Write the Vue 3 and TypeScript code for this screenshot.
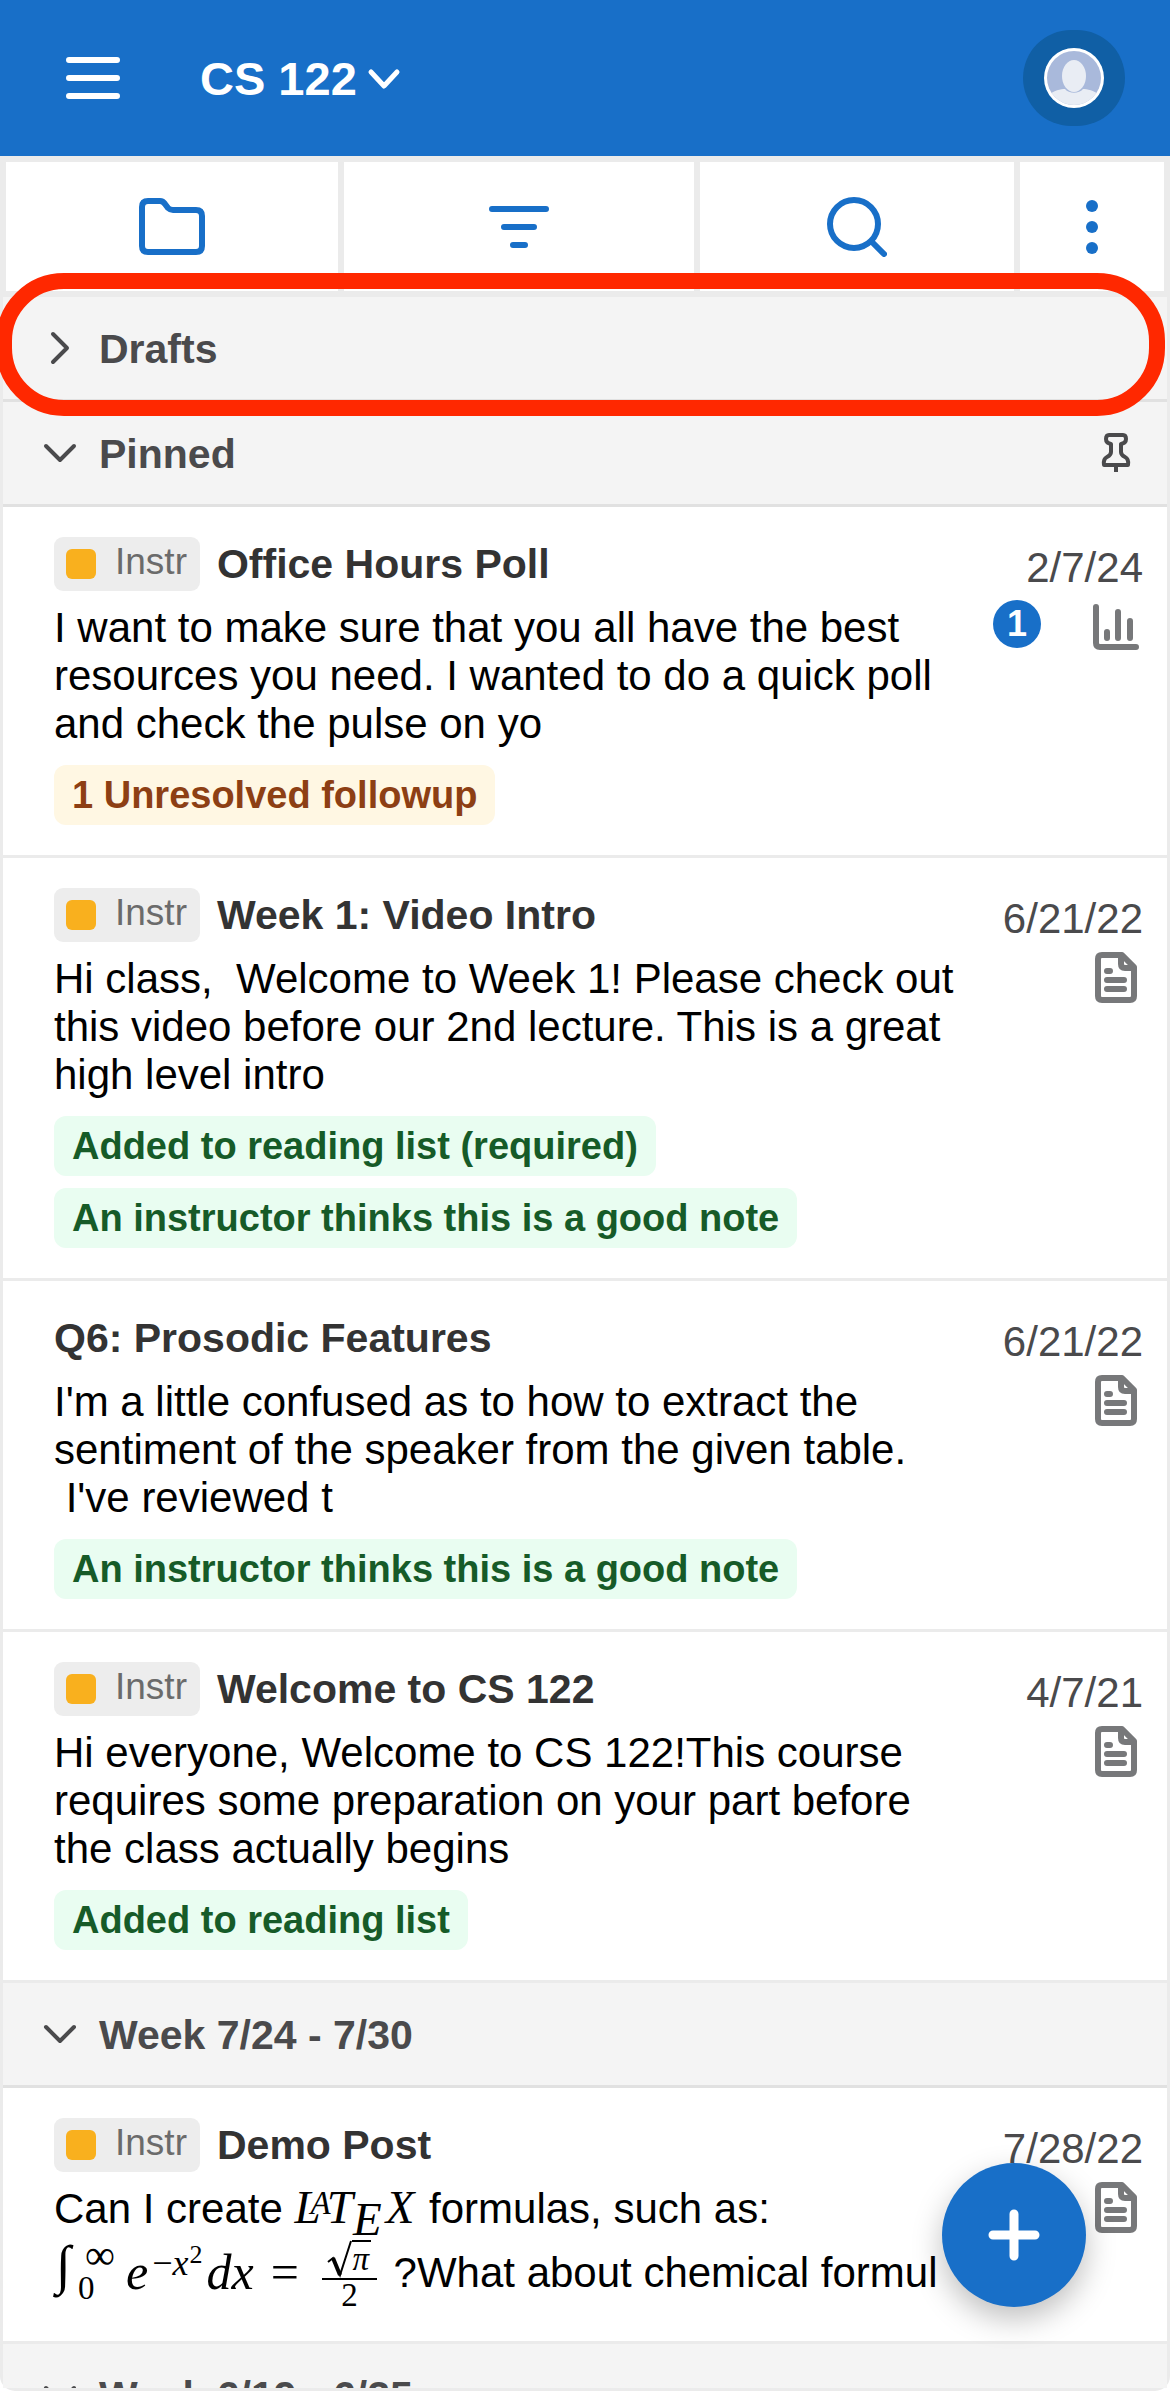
<script setup lang="ts">
import { ref } from 'vue'

type PostKind = 'poll' | 'note'

interface Tag {
  text: string
  tone: 'warn' | 'good'
}

interface Post {
  title: string
  instructor: boolean
  date: string
  kind: PostKind
  unread?: number
  preview?: string
  formula?: boolean
  tags: Tag[]
}

interface Section {
  label: string
  pinned: boolean
  posts: Post[]
}

const course = ref('CS 122')

const sections: Section[] = [
  {
    label: 'Pinned',
    pinned: true,
    posts: [
      {
        title: 'Office Hours Poll',
        instructor: true,
        date: '2/7/24',
        kind: 'poll',
        unread: 1,
        preview:
          'I want to make sure that you all have the best resources you need. I wanted to do a quick poll and check the pulse on yo',
        tags: [{ text: '1 Unresolved followup', tone: 'warn' }],
      },
      {
        title: 'Week 1: Video Intro',
        instructor: true,
        date: '6/21/22',
        kind: 'note',
        preview:
          'Hi class,\u00a0 Welcome to Week 1! Please check out this video before our 2nd lecture. This is a great high level intro',
        tags: [
          { text: 'Added to reading list (required)', tone: 'good' },
          { text: 'An instructor thinks this is a good note', tone: 'good' },
        ],
      },
      {
        title: 'Q6: Prosodic Features',
        instructor: false,
        date: '6/21/22',
        kind: 'note',
        preview:
          "I'm a little confused as to how to extract the sentiment of the speaker from the given table. \u00a0I've reviewed t",
        tags: [{ text: 'An instructor thinks this is a good note', tone: 'good' }],
      },
      {
        title: 'Welcome to CS 122',
        instructor: true,
        date: '4/7/21',
        kind: 'note',
        preview:
          'Hi everyone, Welcome to CS 122!This course requires some preparation on your part before the class actually begins',
        tags: [{ text: 'Added to reading list', tone: 'good' }],
      },
    ],
  },
  {
    label: 'Week 7/24 - 7/30',
    pinned: false,
    posts: [
      {
        title: 'Demo Post',
        instructor: true,
        date: '7/28/22',
        kind: 'note',
        formula: true,
        tags: [],
      },
    ],
  },
  { label: 'Week 6/19 - 6/25', pinned: false, posts: [] },
]
</script>

<template>
  <div class="app">
    <header class="topbar">
      <button class="menu" type="button" aria-label="Menu">
        <svg width="54" height="42" viewBox="0 0 54 42" class="line">
          <path d="M3 3H51M3 21H51M3 39H51" />
        </svg>
      </button>
      <button class="course" type="button">
        <span>{{ course }}</span>
        <svg width="36" height="36" viewBox="0 0 36 36" class="line medium">
          <path d="M5 12L18 26L31 12" />
        </svg>
      </button>
      <button class="account" type="button" aria-label="Account">
        <svg width="60" height="60" viewBox="0 0 60 60">
          <defs>
            <clipPath id="face"><circle cx="30" cy="30" r="27" /></clipPath>
          </defs>
          <circle cx="30" cy="30" r="30" fill="#fff" />
          <g clip-path="url(#face)">
            <rect width="60" height="60" fill="#a9b9db" />
            <path d="M3 60V48C10 42 17 41 21 41C25 46 35 46 39 41C43 41 50 42 57 48V60Z" fill="#e9edf4" />
            <ellipse cx="30" cy="28" rx="12" ry="16" fill="#e9edf4" />
          </g>
        </svg>
      </button>
    </header>

    <nav class="toolbar" aria-label="Feed tools">
      <button type="button" aria-label="Folders">
        <svg width="66" height="57" viewBox="0 0 66 57" class="line">
          <path
            d="M3 9Q3 3 9 3H21Q24 3 26 6L29 10Q31 12 34 12H57Q63 12 63 18V48Q63 54 57 54H9Q3 54 3 48Z"
          />
        </svg>
      </button>
      <button type="button" aria-label="Filter">
        <svg width="60" height="42" viewBox="0 0 60 42" class="line">
          <path d="M3 3H57M15 21H45M24 39H36" />
        </svg>
      </button>
      <button type="button" aria-label="Search">
        <svg width="60" height="60" viewBox="0 0 60 60" class="line">
          <circle cx="27" cy="27" r="24" />
          <path d="M45 45L57 57" />
        </svg>
      </button>
      <button type="button" aria-label="More">
        <svg width="12" height="54" viewBox="0 0 12 54" fill="currentColor">
          <circle cx="6" cy="6" r="6" />
          <circle cx="6" cy="27" r="6" />
          <circle cx="6" cy="48" r="6" />
        </svg>
      </button>
    </nav>

    <main class="feed">
      <div class="drafts">
        <button class="group" type="button" aria-expanded="false">
          <svg width="36" height="36" viewBox="0 0 36 36" class="line thin">
            <path d="M11 4L25 18L11 32" />
          </svg>
          <span class="label">Drafts</span>
        </button>
        <div class="highlight"></div>
      </div>

      <div class="list">
        <section v-for="section in sections" :key="section.label">
          <button class="group" type="button" aria-expanded="true">
            <svg width="36" height="36" viewBox="0 0 36 36" class="line thin">
              <path d="M4 11L18 25L32 11" />
            </svg>
            <span class="label">{{ section.label }}</span>
            <svg v-if="section.pinned" class="pin" width="48" height="48" viewBox="0 0 48 48">
              <path
                d="M17 6H31Q34 6 34 10Q34 14 29 15V23Q29 26 33 28Q37 30 36 36H12Q11 30 15 28Q19 26 19 23V15Q14 14 14 10Q14 6 17 6ZM24 36V43"
              />
            </svg>
          </button>

          <article v-for="post in section.posts" :key="post.title" class="post">
            <div class="body">
              <div class="head">
                <span v-if="post.instructor" class="instr"><i></i>Instr</span>
                <h2>{{ post.title }}</h2>
              </div>
              <p v-if="post.formula" class="preview">
                Can I create
                <span class="math latex"
                  ><span>L</span><span class="la">A</span><span class="lt">T</span
                  ><span class="le">E</span><span class="lx">X</span></span
                >
                formulas, such as:
                <span class="math integral">
                  <span class="int">∫</span>
                  <span class="limits"><span class="upper">∞</span><span>0</span></span>
                  <span class="term"
                    ><em>e</em><span class="power">−<em>x</em><span class="square">2</span></span
                    ><em>dx</em></span
                  >
                  <span class="equals">=</span>
                  <span class="fraction">
                    <span class="numerator">
                      <svg width="25" height="38" viewBox="0 0 25 38">
                        <path d="M1 22L6 18L13 35L24 1" />
                        <path d="M6 18L13 35" stroke-width="4" />
                      </svg>
                      <span class="radicand">π</span>
                    </span>
                    <span class="denominator">2</span>
                  </span>
                </span>
                ?What about chemical formul
              </p>
              <p v-else class="preview">{{ post.preview }}</p>
              <ul v-if="post.tags.length" class="tags">
                <li v-for="tag in post.tags" :key="tag.text" :class="tag.tone">{{ tag.text }}</li>
              </ul>
            </div>
            <div class="side">
              <time>{{ post.date }}</time>
              <div class="marks">
                <span v-if="post.unread" class="count">{{ post.unread }}</span>
                <svg v-if="post.kind === 'poll'" width="54" height="54" viewBox="0 0 54 54" class="line mark">
                  <path d="M7 7V43Q7 47 11 47H47M18 32V38M29 12V38M41 21V38" />
                </svg>
                <svg v-else width="54" height="54" viewBox="0 0 54 54" class="line mark">
                  <path
                    d="M33 4H13Q9 4 9 8V45Q9 49 13 49H41Q45 49 45 45V16ZM32 4V13Q32 17 36 17H45M18 20H21M18 29H35M18 38H35"
                  />
                </svg>
              </div>
            </div>
          </article>
        </section>
      </div>
    </main>

    <button class="fab" type="button" aria-label="New post">
      <svg width="54" height="54" viewBox="0 0 54 54">
        <path d="M27 6V48M6 27H48" />
      </svg>
    </button>
  </div>
</template>

<style>
body {
  margin: 0;
  background: #fff;
}
</style>

<style scoped>
.app {
  display: flex;
  flex-direction: column;
  height: 100vh;
  overflow: hidden;
  font-family: 'Liberation Sans', Arial, sans-serif;
  font-size: 42px;
  color: #000;
}

button {
  margin: 0;
  padding: 0;
  border: 0;
  background: none;
  color: inherit;
  font: inherit;
  cursor: pointer;
}

svg {
  display: block;
  flex: none;
}

.line {
  fill: none;
  stroke: currentColor;
  stroke-width: 6;
  stroke-linecap: round;
  stroke-linejoin: round;
}

.medium {
  stroke-width: 5;
}

.thin {
  stroke-width: 4;
}

.topbar {
  flex: none;
  display: flex;
  align-items: center;
  height: 156px;
  padding: 0 45px 0 66px;
  box-sizing: border-box;
  background: #186fc8;
  color: #fff;
}

.course {
  display: flex;
  align-items: center;
  gap: 9px;
  margin-left: 80px;
  font-size: 47px;
  font-weight: 700;
}

.account {
  display: flex;
  align-items: center;
  justify-content: center;
  width: 102px;
  height: 96px;
  margin-left: auto;
  border-radius: 48px;
  background: #105fa5;
}

.toolbar {
  flex: none;
  display: grid;
  grid-template-columns: 332fr 350fr 314fr 144fr;
  gap: 6px;
  padding: 6px;
  background: #ebebeb;
  color: #186fc8;
}

.toolbar button {
  display: flex;
  align-items: center;
  justify-content: center;
  height: 129px;
  background: #fff;
}

.feed {
  flex: 1;
  display: flex;
  flex-direction: column;
  min-height: 0;
  border: 3px solid #ebebeb;
  border-top: 0;
  border-radius: 0 0 15px 15px;
  background: #f4f4f4;
}

.drafts {
  position: relative;
  flex: none;
}

.highlight {
  position: absolute;
  z-index: 1;
  top: -24px;
  right: 2px;
  bottom: -14px;
  left: -7px;
  border: 16px solid #ff2800;
  border-radius: 68px;
  pointer-events: none;
}

.list {
  flex: 1;
  min-height: 0;
  overflow: hidden;
}

.group {
  display: flex;
  align-items: center;
  gap: 21px;
  width: 100%;
  height: 105px;
  padding: 0 27px 0 39px;
  border-bottom: 3px solid #e1e1e1;
  background: #f4f4f4;
  color: #4a4a4c;
}

.label {
  padding-top: 2px;
  font-size: 41px;
  font-weight: 700;
}

.pin {
  margin-left: auto;
  fill: none;
  stroke: currentColor;
  stroke-width: 4;
  stroke-linejoin: round;
}

.post {
  display: flex;
  padding: 30px 24px 30px 51px;
  border-bottom: 3px solid #ebebeb;
  background: #fff;
}

.body {
  flex: 1;
  min-width: 0;
}

.head {
  display: flex;
  align-items: center;
  gap: 17px;
  height: 54px;
}

.instr {
  display: flex;
  align-items: center;
  gap: 19px;
  height: 54px;
  padding: 0 13px 0 12px;
  border-radius: 9px;
  background: #ededed;
  color: #6b6b6b;
  font-size: 37px;
  line-height: 50px;
  padding-bottom: 4px;
  box-sizing: border-box;
}

.instr i {
  width: 30px;
  height: 30px;
  margin-top: 4px;
  border-radius: 6px;
  background: #f9b01e;
}

h2 {
  margin: 0;
  color: #333;
  font-size: 41px;
  line-height: 56px;
}

.preview {
  margin: 13px 0 0;
  line-height: 48px;
}

.tags {
  display: flex;
  flex-direction: column;
  align-items: flex-start;
  gap: 12px;
  margin: 17px 0 0;
  padding: 0;
  list-style: none;
  font-size: 38px;
  font-weight: 700;
  line-height: 60px;
}

.tags li {
  padding: 0 18px;
  border-radius: 12px;
}

.warn {
  background: #fff7e3;
  color: #8d3f14;
}

.good {
  background: #e9fdf1;
  color: #165b28;
}

.side {
  flex: none;
  width: 183px;
  text-align: right;
  color: #4a4a4c;
}

time {
  display: block;
  line-height: 62px;
}

.marks {
  display: flex;
  justify-content: flex-end;
  gap: 48px;
  margin-top: 1px;
}

.mark {
  color: #77787a;
}

.count {
  width: 48px;
  height: 48px;
  border-radius: 24px;
  background: #186fc8;
  color: #fff;
  font-size: 36px;
  font-weight: 700;
  line-height: 48px;
  text-align: center;
}

.math {
  font-family: 'Liberation Serif', 'Times New Roman', serif;
  font-size: 47px;
  white-space: nowrap;
}

.latex {
  margin-right: 3px;
  font-style: italic;
  line-height: 0;
}

.la {
  margin-left: -10px;
  font-size: 33px;
  vertical-align: 9px;
}

.lt {
  margin-left: -4px;
}

.le {
  vertical-align: -12px;
}

.lx {
  margin-left: 4px;
}

.integral {
  display: inline-flex;
  align-items: center;
  height: 78px;
  margin-right: 5px;
  vertical-align: 4px;
  font-size: 50px;
  line-height: 60px;
}

.int {
  align-self: flex-start;
  width: 22px;
  padding-left: 2px;
  font-size: 54px;
  line-height: 64px;
}

.limits {
  display: flex;
  flex-direction: column;
  width: 48px;
  font-size: 33px;
  line-height: 33px;
}

.upper {
  padding-left: 7px;
  font-size: 42px;
}

.power {
  margin: 0 4px;
  font-size: 36px;
  line-height: 0;
  vertical-align: 14px;
}

.square {
  margin-left: 1px;
  font-size: 26px;
  vertical-align: 12px;
}

.equals {
  margin: 0 23px 0 17px;
}

.fraction {
  display: flex;
  flex-direction: column;
  align-items: center;
  align-self: flex-start;
  width: 55px;
  font-size: 33px;
}

.numerator {
  display: flex;
  align-items: flex-end;
  align-self: stretch;
  justify-content: center;
  height: 38px;
  padding-top: 7px;
  border-bottom: 2px solid #000;
}

.numerator svg {
  fill: none;
  stroke: #000;
  stroke-width: 2;
}

.radicand {
  width: 19px;
  height: 36px;
  border-top: 2px solid #000;
  line-height: 34px;
  font-style: italic;
}

.denominator {
  line-height: 31px;
}

.fab {
  position: fixed;
  right: 84px;
  bottom: 84px;
  display: flex;
  align-items: center;
  justify-content: center;
  width: 144px;
  height: 144px;
  border-radius: 72px;
  background: #186fc8;
  box-shadow: 0 12px 30px rgba(0, 0, 0, 0.25);
}

.fab path {
  fill: none;
  stroke: #fff;
  stroke-width: 9;
  stroke-linecap: round;
}
</style>
